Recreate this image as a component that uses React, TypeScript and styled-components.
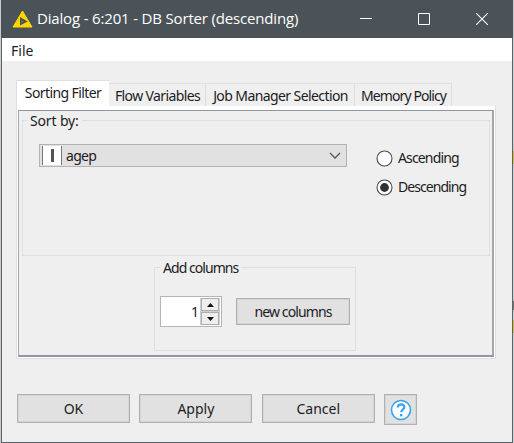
import React from 'react';
import styled, { createGlobalStyle } from 'styled-components';

const Global = createGlobalStyle`
  * { box-sizing: border-box; }
  body { margin: 0; background: #c9cbcc; overflow: hidden; }
`;

const Desktop = styled.div`
  width: 514px;
  height: 443px;
  padding: 0 1px 0 1px;
  background:
    linear-gradient(#c9cbcc, #c9cbcc) left / 2px 100% no-repeat,
    linear-gradient(to bottom, #c9cbcc 0 151px, #d4b42c 151px 164px, #c9cbcc 164px 301px, #77706c 301px 310px, #c9cbcc 310px 320px, #d4b42c 320px 333px, #c9cbcc 333px);
`;

const Frame = styled.main`
  display: flex;
  flex-direction: column;
  height: 443px;
  background: #efefef;
  border: 1px solid #5b6469;
  border-top: 0;
  color: #1c1c24;
  font: 14px/16px 'Noto Sans', 'Open Sans', sans-serif;
`;

const Label = styled.span<{ $spacing?: number }>`
  display: inline-block;
  white-space: nowrap;
  letter-spacing: ${(p) => p.$spacing ?? 0}px;
`;

const TitleBar = styled.header`
  display: flex;
  align-items: center;
  height: 38px;
  margin: 0 -1px;
  padding: 0 25px 0 11px;
  background: #4b5358;
  color: #fff;
  font: 15px/20px 'Open Sans', 'Noto Sans', sans-serif;
`;

const Title = styled.h1`
  flex: 1;
  margin: 0 0 2px 4px;
  font: inherit;
  letter-spacing: -0.17px;
  white-space: nowrap;
`;

const WindowControls = styled.div`
  display: flex;
  gap: 46px;
`;

const MenuBar = styled.nav`
  height: 23px;
  padding: 5px 9px 0;
  background: #fff;
`;

const Content = styled.div`
  padding: 19px 16px 0 14px;
`;

const TabStrip = styled.div`
  display: flex;
  align-items: flex-end;
  height: 26px;
`;

const Tab = styled.div<{ $width: number; $selected?: boolean }>`
  display: flex;
  justify-content: center;
  width: ${(p) => p.$width}px;
  height: ${(p) => (p.$selected ? 27 : 23)}px;
  margin-bottom: ${(p) => (p.$selected ? -1 : 0)}px;
  padding: 4px 0 0 ${(p) => (p.$selected ? 0 : 1)}px;
  background: ${(p) => (p.$selected ? '#fff' : '#efefef')};
  border: solid #dedede;
  border-width: ${(p) => (p.$selected ? '1px 0 0 1px' : '1px 1px 0 0')};
`;

const TabPane = styled.section`
  height: 253px;
  padding: 4px 1px 2px;
  background: #fff;
  border: 1px solid #dfdfdf;
  border-top-width: 0;
`;

const PaneBody = styled.div`
  height: 247px;
  padding: 9px 2px 0 3px;
  background: #efefef;
  border: 1px solid #9599a0;
  border-width: 1px 2px 2px 1px;
  border-color: #92969d #a2a6ad #9297a0 #a2a6ad;
`;

const Group = styled.section`
  border: 1px solid #dedede;
`;

const SortGroup = styled(Group)`
  height: 136px;
`;

const AddGroup = styled(Group)`
  width: 202px;
  height: 84px;
  margin: 11px 0 0 132px;
`;

const Legend = styled.div<{ $left: number }>`
  width: max-content;
  height: 16px;
  margin: -8px 0 0 ${(p) => p.$left}px;
  padding: 0 3px 0 2px;
  background: #efefef;
`;

const SortRow = styled.div`
  display: flex;
  padding: 15px 0 0 16px;
`;

const Combo = styled.div`
  display: flex;
  align-items: center;
  width: 308px;
  height: 23px;
  padding: 0 5px 0 2px;
  background: #e1e1e1;
  border: 1px solid #b3b3b3;
`;

const TypeIcon = styled.div`
  display: flex;
  align-items: center;
  justify-content: center;
  width: 20px;
  height: 19px;
  margin-right: 4px;
  background: #fff;
  border: solid #777;
  border-width: 0 1px;
`;

const TypeBar = styled.div`
  width: 3px;
  height: 13px;
  background: #555;
`;

const ComboText = styled(Label)`
  flex: 1;
`;

const Radios = styled.div`
  display: grid;
  gap: 13px;
  margin: 6px 0 0 29px;
`;

const Radio = styled.label`
  display: flex;
  align-items: center;
  gap: 5px;
  height: 16px;
`;

const AddRow = styled.div`
  display: flex;
  align-items: center;
  gap: 14px;
  padding: 20px 0 0 5px;
`;

const Spinner = styled.div`
  display: flex;
  width: 62px;
  height: 31px;
  padding: 1px;
  background: #fff;
  border: 1px solid #b2b5ba;
`;

const SpinValue = styled.span`
  flex: 1;
  padding: 6px 1px 0 0;
  text-align: right;
`;

const SpinButtons = styled.div`
  display: grid;
  grid-template-rows: 13px 13px;
  width: 20px;
  gap: 1px;
  background: #cfcfcf;
  padding: 0 1px;
`;

const SpinButton = styled.div`
  display: flex;
  align-items: center;
  justify-content: center;
  background: #eee;
  border: 1px solid #adadad;
`;

const Button = styled.button<{ $width: number; $height: number }>`
  display: flex;
  align-items: center;
  justify-content: center;
  width: ${(p) => p.$width}px;
  height: ${(p) => p.$height}px;
  padding: 0;
  background: #e1e1e1;
  border: 1px solid #b0b0b0;
  box-shadow: inset 0 0 0 1px #d4d4d4;
  color: inherit;
  font: inherit;
`;

const ActionBar = styled.footer`
  display: flex;
  gap: 9.4px;
  padding: 35px 0 0 15px;
`;

const Logo = () => (
  <svg width="21" height="18" viewBox="0 0 21 18">
    <path d="M10.5 1 20 17H1Z" fill="#ffd500" stroke="#ffd500" strokeLinejoin="round" />
    <path d="m8 7 7.7 4.6L8 15.4Z" fill="#4b5358" />
    <path d="m9.6 11 1.6.8-1.6 1Z" fill="#b5a01c" />
  </svg>
);

const RadioMark = ({ checked }: { checked?: boolean }) => (
  <svg width="17" height="17" viewBox="0 0 17 17">
    <circle cx="8.5" cy="8.5" r="7.5" fill="#fff" stroke="#4a4a4a" strokeWidth="1.1" />
    {checked && <circle cx="8.5" cy="8.5" r="4.4" fill="#303030" />}
  </svg>
);

const Arrow = ({ down }: { down?: boolean }) => (
  <svg width="7" height="4" viewBox="0 0 7 4">
    <path d={down ? 'M0 0h7L3.5 4Z' : 'M0 4h7L3.5 0Z'} fill="#111" />
  </svg>
);

export default function App() {
  return (
    <Desktop>
      <Global />
      <Frame>
        <TitleBar>
          <Logo />
          <Title>Dialog - 6:201 - DB Sorter (descending)</Title>
          <WindowControls>
            <svg width="12" height="12" viewBox="0 0 12 12"><path d="M0 5.5h12" stroke="#fff" /></svg>
            <svg width="12" height="12" viewBox="0 0 12 12"><path d="M.5.5h11v11H.5Z" fill="none" stroke="#fff" /></svg>
            <svg width="12" height="12" viewBox="0 0 12 12"><path d="m0 0 12 12M12 0 0 12" stroke="#fff" strokeWidth="1.1" /></svg>
          </WindowControls>
        </TitleBar>
        <MenuBar><Label>File</Label></MenuBar>
        <Content>
          <TabStrip>
            <Tab $width={93} $selected><Label $spacing={-0.6}>Sorting Filter</Label></Tab>
            <Tab $width={97}><Label $spacing={-0.62}>Flow Variables</Label></Tab>
            <Tab $width={149}><Label $spacing={-0.59}>Job Manager Selection</Label></Tab>
            <Tab $width={97}><Label $spacing={-0.9}>Memory Policy</Label></Tab>
          </TabStrip>
          <TabPane>
            <PaneBody>
              <SortGroup>
                <Legend $left={5}><Label $spacing={-0.15}>Sort by:</Label></Legend>
                <SortRow>
                  <Combo>
                    <TypeIcon><TypeBar /></TypeIcon>
                    <ComboText $spacing={-0.7}>agep</ComboText>
                    <svg width="12" height="7" viewBox="0 0 12 7"><path d="m1 1 5 5 5-5" fill="none" stroke="#555" strokeWidth="1.3" /></svg>
                  </Combo>
                  <Radios>
                    <Radio><RadioMark /><Label $spacing={-0.85}>Ascending</Label></Radio>
                    <Radio><RadioMark checked /><Label $spacing={-0.95}>Descending</Label></Radio>
                  </Radios>
                </SortRow>
              </SortGroup>
              <AddGroup>
                <Legend $left={6}><Label $spacing={-0.95}>Add columns</Label></Legend>
                <AddRow>
                  <Spinner>
                    <SpinValue>1</SpinValue>
                    <SpinButtons>
                      <SpinButton><Arrow /></SpinButton>
                      <SpinButton><Arrow down /></SpinButton>
                    </SpinButtons>
                  </Spinner>
                  <Button $width={114} $height={27}><Label $spacing={-0.9}>new columns</Label></Button>
                </AddRow>
              </AddGroup>
            </PaneBody>
          </TabPane>
        </Content>
        <ActionBar>
          <Button $width={113} $height={29}><Label>OK</Label></Button>
          <Button $width={113} $height={29}><Label>Apply</Label></Button>
          <Button $width={113} $height={29}><Label>Cancel</Label></Button>
          <Button $width={33} $height={31} aria-label="Help">
            <svg width="22" height="22" viewBox="0 0 22 22">
              <circle cx="11" cy="11" r="9.5" fill="#fff" stroke="#35a3f1" strokeWidth="1.6" />
              <path d="M7.8 8.6c0-4.3 6.6-4.1 6.6-.5 0 2.5-3.2 2.4-3.2 5.2" fill="none" stroke="#35a3f1" strokeWidth="2.2" />
              <path d="M10 15h2.4v2.4H10Z" fill="#35a3f1" />
            </svg>
          </Button>
        </ActionBar>
      </Frame>
    </Desktop>
  );
}
